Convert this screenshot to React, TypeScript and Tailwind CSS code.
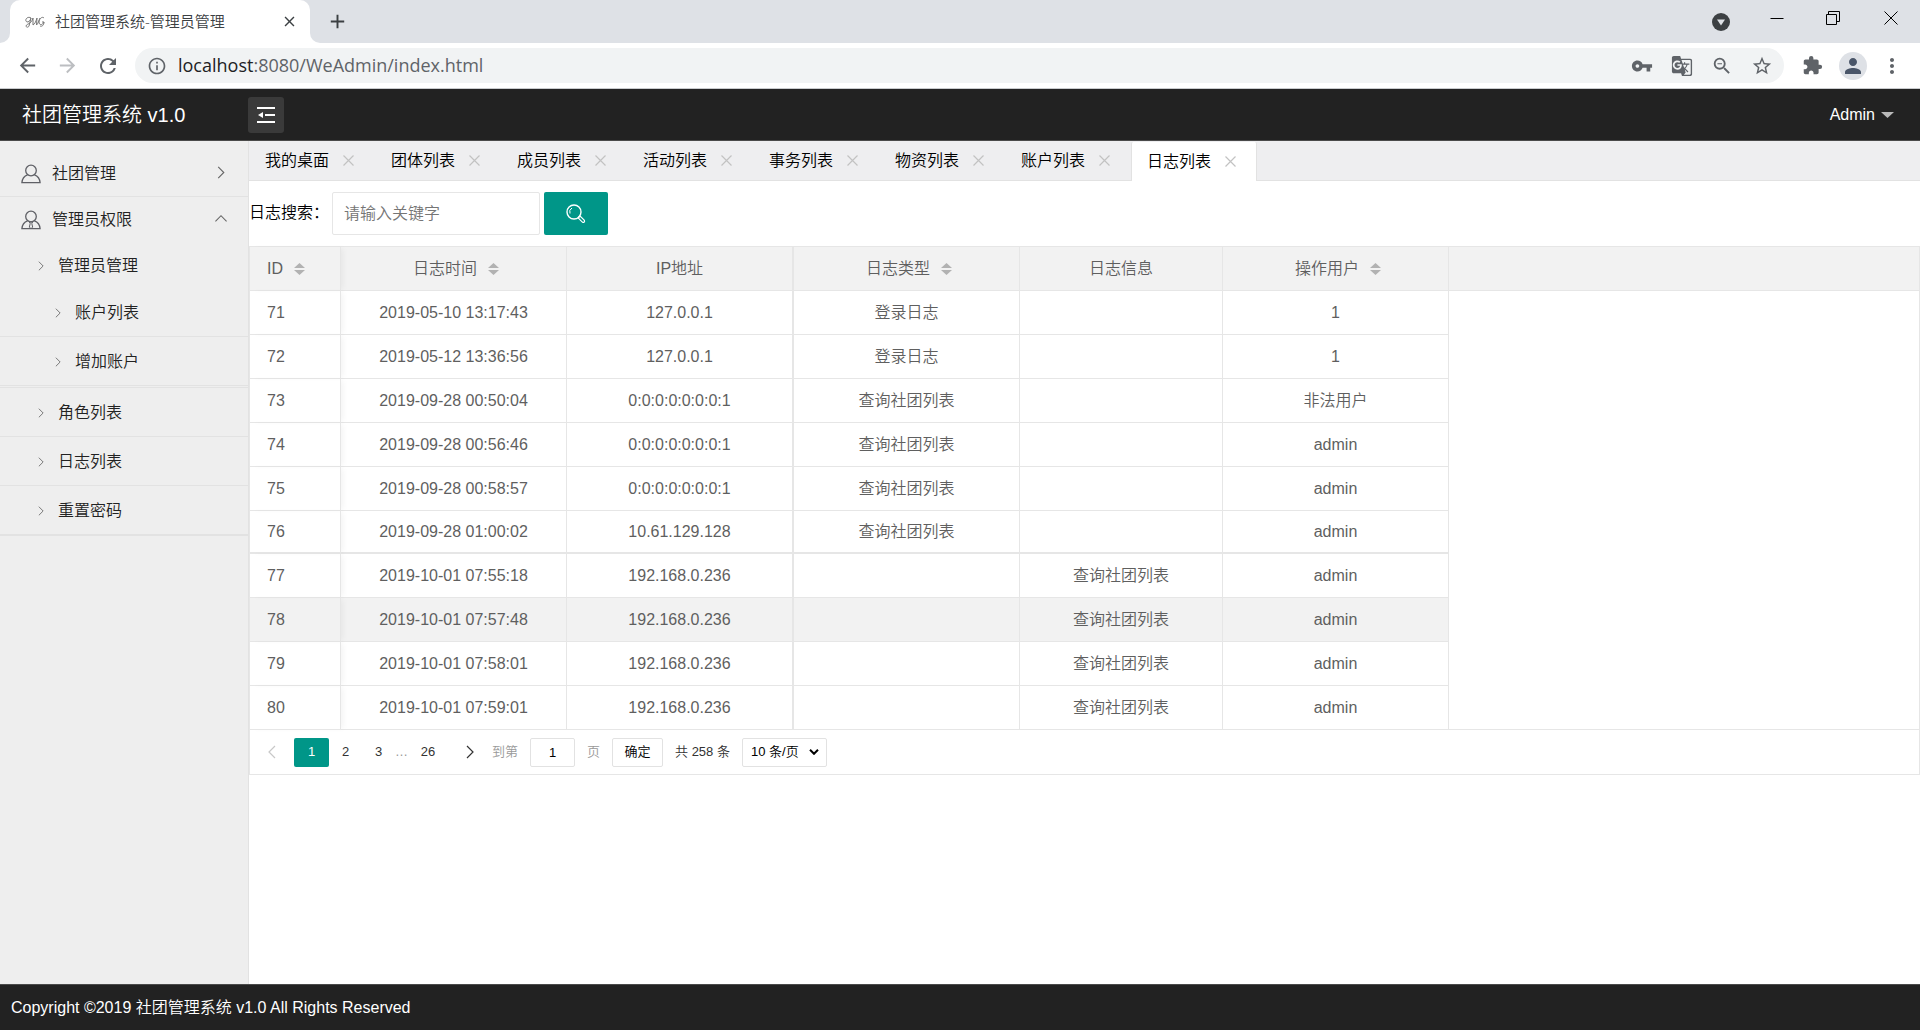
import React, { useState } from 'react';
import {
  MdAdd,
  MdArrowBack,
  MdArrowForward,
  MdClose,
  MdExtension,
  MdGTranslate,
  MdInfoOutline,
  MdMoreVert,
  MdPerson,
  MdRefresh,
  MdStarBorder,
  MdVpnKey,
  MdZoomOut,
} from 'react-icons/md';

interface LogRow {
  id: number;
  time: string;
  ip: string;
  type: string;
  info: string;
  user: string;
}

const logs: LogRow[] = [
  { id: 71, time: '2019-05-10 13:17:43', ip: '127.0.0.1', type: '登录日志', info: '', user: '1' },
  { id: 72, time: '2019-05-12 13:36:56', ip: '127.0.0.1', type: '登录日志', info: '', user: '1' },
  { id: 73, time: '2019-09-28 00:50:04', ip: '0:0:0:0:0:0:0:1', type: '查询社团列表', info: '', user: '非法用户' },
  { id: 74, time: '2019-09-28 00:56:46', ip: '0:0:0:0:0:0:0:1', type: '查询社团列表', info: '', user: 'admin' },
  { id: 75, time: '2019-09-28 00:58:57', ip: '0:0:0:0:0:0:0:1', type: '查询社团列表', info: '', user: 'admin' },
  { id: 76, time: '2019-09-28 01:00:02', ip: '10.61.129.128', type: '查询社团列表', info: '', user: 'admin' },
  { id: 77, time: '2019-10-01 07:55:18', ip: '192.168.0.236', type: '', info: '查询社团列表', user: 'admin' },
  { id: 78, time: '2019-10-01 07:57:48', ip: '192.168.0.236', type: '', info: '查询社团列表', user: 'admin' },
  { id: 79, time: '2019-10-01 07:58:01', ip: '192.168.0.236', type: '', info: '查询社团列表', user: 'admin' },
  { id: 80, time: '2019-10-01 07:59:01', ip: '192.168.0.236', type: '', info: '查询社团列表', user: 'admin' },
];

const pageTabs = ['我的桌面', '团体列表', '成员列表', '活动列表', '事务列表', '物资列表', '账户列表', '日志列表'];

const columns = [
  { title: '日志时间', sortable: true },
  { title: 'IP地址', sortable: false },
  { title: '日志类型', sortable: true },
  { title: '日志信息', sortable: false },
  { title: '操作用户', sortable: true },
];

const Chevron = ({ className }: { className: string }) => (
  <svg viewBox="0 0 8 14" className={className} fill="none" stroke="currentColor" strokeWidth="1.2">
    <path d="M1 1l6 6-6 6" />
  </svg>
);

const SortIcon = () => (
  <svg viewBox="0 0 11 12" className="ml-[11px] -mr-[5px] h-3 w-[11px] fill-[#b2b2b2]">
    <path d="M5.500 0L11 5H0zM0 7h11l-5.500 5z" />
  </svg>
);

const UserIcon = ({ tie = false }: { tie?: boolean }) => (
  <svg viewBox="0 0 20 20" className="h-5 w-5" fill="none" stroke="#5f6066" strokeWidth="1.3">
    <circle cx="10" cy="6.500" r="5.300" />
    <path d="M6.600 10.800C3.200 12 1.200 14.800 .9 18.600h18.200c-.3-3.800-2.300-6.600-5.700-7.800" />
    {tie && <path d="M8.400 12h3.200l-.8 1.600.9 3.600-1.700 1.400-1.700-1.400.9-3.600z" strokeWidth="1" />}
  </svg>
);

const BrowserChrome = () => (
  <div className="font-['Open_Sans','Noto_Sans_CJK_SC',sans-serif]">
    <div className="flex h-[43px] items-start bg-[#dee1e6]">
      <div className="flex h-[43px] w-[10px] bg-white">
        <div className="flex-1 rounded-br-[10px] bg-[#dee1e6]" />
      </div>
      <div className="flex h-[43px] w-[300px] items-center rounded-t-[10px] bg-white pr-3 pl-[15px]">
        <svg viewBox="0 0 20 12" className="h-3 w-5" fill="none" stroke="#777" strokeWidth="1">
          <path d="M6 2C3 0 0 3 1 5s4 1 5-3L4 10c-1 2-3 1-3 0 1-3 5-1 7-8v7c2-1 3-4 4-7l-.5 7C13 8 14 4 15 2M19 2c-2-2-5 1-5 4s3 4 5 0h-2M19 6c0 3-2 5-4 4" />
        </svg>
        <span className="ml-[10px] text-[15px] font-[350] text-[#3c4043]">社团管理系统-管理员管理</span>
        <button className="ml-auto text-[#3c4043]" aria-label="Close tab">
          <MdClose size={17} />
        </button>
      </div>
      <div className="flex h-[43px] w-[10px] bg-white">
        <div className="flex-1 rounded-bl-[10px] bg-[#dee1e6]" />
      </div>
      <button className="mt-[10px] ml-[6px] text-[#3c4043]" aria-label="New tab">
        <MdAdd size={23} />
      </button>
      <div className="ml-auto flex h-[43px] items-center pr-[22px]">
        <button aria-label="Search tabs">
          <svg viewBox="0 0 18 18" className="h-[18px] w-[18px]">
            <circle cx="9" cy="9" r="9" fill="#3c4043" />
            <path d="M5 6.500h8L9 12.500z" fill="#dee1e6" />
          </svg>
        </button>
        <button className="ml-10 pb-2" aria-label="Minimize">
          <svg viewBox="0 0 14 14" className="h-[14px] w-[14px]" stroke="#000">
            <path d="M.5 7.500h13" />
          </svg>
        </button>
        <button className="ml-[42px] pb-2" aria-label="Restore">
          <svg viewBox="0 0 14 14" className="h-[14px] w-[14px]" fill="none" stroke="#000">
            <path d="M.5 3.500h10v10h-10zM2.500 3.500v-3h11v10h-3" />
          </svg>
        </button>
        <button className="ml-[44px] pb-2" aria-label="Close window">
          <svg viewBox="0 0 14 14" className="h-[14px] w-[14px]" stroke="#000">
            <path d="M.5.5l13 13M13.500.5l-13 13" />
          </svg>
        </button>
      </div>
    </div>
    <div className="flex h-[46px] items-center border-b border-[#c9cbce] bg-white text-[#5f6368]">
      <button className="ml-4" aria-label="Back">
        <MdArrowBack size={23} />
      </button>
      <button className="ml-[17px] text-[#bcbec1]" aria-label="Forward">
        <MdArrowForward size={23} />
      </button>
      <button className="ml-[17px]" aria-label="Reload">
        <MdRefresh size={24} />
      </button>
      <div className="ml-[15px] flex h-[35px] flex-1 items-center rounded-full bg-[#f1f3f4] pr-[11px] pl-3">
        <MdInfoOutline size={20} />
        <span className="ml-[11px] text-[18px]">
          <span className="text-[#202124]">localhost</span>:8080/WeAdmin/index.html
        </span>
        <div className="ml-auto flex items-center gap-[18px]">
          <MdVpnKey size={22} />
          <MdGTranslate size={22} />
          <MdZoomOut size={22} />
          <MdStarBorder size={22} />
        </div>
      </div>
      <MdExtension size={21} className="ml-[18px]" />
      <div className="ml-4 flex h-7 w-7 items-center justify-center rounded-full bg-[#dee1e6] text-[#4a5669]">
        <MdPerson size={24} />
      </div>
      <button className="mr-4 ml-[13px]" aria-label="Menu">
        <MdMoreVert size={24} />
      </button>
    </div>
  </div>
);

const AppHeader = () => (
  <header className="flex h-[52px] items-center border-b border-[#4a4a4a] bg-[#222222] text-white">
    <h1 className="w-[248px] pl-[22px] text-[20px] font-[350]">社团管理系统 v1.0</h1>
    <button className="flex h-9 w-9 items-center justify-center rounded-[3px] bg-[#3a3a3a]" aria-label="Toggle menu">
      <svg viewBox="0 0 18 16" className="h-4 w-[18px]" fill="none" stroke="#fff" strokeWidth="2">
        <path d="M0 1h18M8 8h10M0 15h18" />
        <path d="M6 5v6L1 8z" fill="#fff" stroke="none" />
      </svg>
    </button>
    <button className="mr-[26px] ml-auto flex items-center gap-[6px] text-base">
      Admin
      <svg viewBox="0 0 13 6" className="h-[6px] w-[13px] fill-[#b9b9b9]">
        <path d="M0 0h13L6.500 6z" />
      </svg>
    </button>
  </header>
);

const Sidebar = () => {
  const linkClass = 'flex h-[49px] items-center border-b border-[#e2e2e2] pt-[2px]';

  return (
    <nav className="w-[249px] shrink-0 border-r border-[#e2e2e2] bg-[#eeeeee] pt-[11px] font-[350] text-[#222]">
      <a href="#club" className="flex h-[45px] items-center border-b border-[#e2e2e2] pr-[23px] pl-[21px]">
        <UserIcon />
        <span className="ml-[11px]">社团管理</span>
        <Chevron className="mb-1 ml-auto h-[13px] w-2 text-[#666]" />
      </a>
      <a href="#admin" className="flex h-[46px] items-center pr-[23px] pl-[21px]">
        <UserIcon tie />
        <span className="ml-[11px]">管理员权限</span>
        <Chevron className="mb-1 ml-auto h-[13px] w-2 -rotate-90 text-[#666]" />
      </a>
      <a href="#manage" className="flex h-[45px] items-center pl-[38px]">
        <Chevron className="h-[10px] w-[6px] text-[#666]" />
        <span className="ml-[14px]">管理员管理</span>
      </a>
      <div className="border-b border-[#e2e2e2] pb-px">
        {['账户列表', '增加账户'].map((label) => (
          <a key={label} href="#account" className={`${linkClass} pl-[55px]`}>
            <Chevron className="h-[10px] w-[6px] text-[#666]" />
            <span className="ml-[14px]">{label}</span>
          </a>
        ))}
      </div>
      <div className="border-b border-[#e2e2e2]">
        {['角色列表', '日志列表', '重置密码'].map((label) => (
          <a key={label} href="#item" className={`${linkClass} pl-[38px]`}>
            <Chevron className="h-[10px] w-[6px] text-[#666]" />
            <span className="ml-[14px]">{label}</span>
          </a>
        ))}
      </div>
    </nav>
  );
};

const TabBar = () => {
  const [active, setActive] = useState('日志列表');

  return (
    <div className="flex h-10 border-b border-[#e2e2e2] bg-[#eeeef0]">
      {pageTabs.map((tab) => (
        <button
          key={tab}
          onClick={() => setActive(tab)}
          className={`flex w-[126px] items-center border-x pr-5 pl-[15px] font-[350] ${
            active === tab ? '-mb-px mt-px rounded-t-[2px] border-[#e2e2e2] bg-white' : 'border-transparent'
          }`}
        >
          {tab}
          <svg viewBox="0 0 11 11" className="ml-auto h-[11px] w-[11px]" stroke="#c2c2c2" strokeWidth="1.2">
            <path d="M.5.5l10 10M10.500.5l-10 10" />
          </svg>
        </button>
      ))}
    </div>
  );
};

const LogTable = () => {
  const cell = 'border-r border-[#e6e6e6]';
  const idCell = 'relative pl-[17px] text-left shadow-[4px_0_6px_-2px_rgba(0,0,0,0.05)]';

  return (
    <table className="w-full table-fixed border-separate border-spacing-0 text-center text-[#5f5f5f]">
      <colgroup>
        <col className="w-[91px]" />
        <col className="w-[226px]" />
        <col className="w-[227px]" />
        <col className="w-[226px]" />
        <col className="w-[203px]" />
        <col className="w-[226px]" />
        <col />
      </colgroup>
      <thead>
        <tr className="h-11 bg-[#f2f2f2]">
          <th className={`${cell} ${idCell} border-b font-[350]`}>
            <div className="flex items-center">
              ID
              <SortIcon />
            </div>
          </th>
          {columns.map((col, i) => (
            <th key={col.title} className={`${cell} border-b font-[350] ${i === 1 ? 'border-r-2' : ''}`}>
              <div className="flex items-center justify-center">
                {col.title}
                {col.sortable && <SortIcon />}
              </div>
            </th>
          ))}
          <th className="border-b border-[#e6e6e6]" />
        </tr>
      </thead>
      <tbody className="font-[350]">
        {logs.map((row, i) => {
          const line = row.id === 76 ? 'h-[43px] border-b-2' : 'h-11 border-b';
          return (
            <tr key={row.id} className={row.id === 78 ? 'bg-[#f2f2f2]' : ''}>
              <td className={`${cell} ${line} ${idCell}`}>{row.id}</td>
              <td className={`${cell} ${line}`}>{row.time}</td>
              <td className={`${cell} ${line} border-r-2`}>{row.ip}</td>
              <td className={`${cell} ${line}`}>{row.type}</td>
              <td className={`${cell} ${line}`}>{row.info}</td>
              <td className={`${cell} ${line}`}>{row.user}</td>
              {i === 0 && <td rowSpan={logs.length} className="border-b border-[#e6e6e6] bg-white" />}
            </tr>
          );
        })}
      </tbody>
    </table>
  );
};

const Pagination = () => (
  <div className="flex h-11 items-center text-[13px] font-[350] text-[#333]">
    <button className="flex w-[44px] justify-center text-[#c8c8c8]" aria-label="Previous page">
      <Chevron className="h-[14px] w-2 rotate-180" />
    </button>
    <button className="h-[29px] w-[35px] rounded-[2px] bg-[#009688] font-normal text-white">1</button>
    <button className="w-[33px]">2</button>
    <button className="w-[33px]">3</button>
    <span className="w-[13px] text-center text-[#999]">…</span>
    <button className="w-[40px]">26</button>
    <button className="flex w-[44px] justify-center" aria-label="Next page">
      <Chevron className="h-[14px] w-2" />
    </button>
    <div className="flex items-center gap-3">
      <label htmlFor="page-no" className="text-[#999]">到第</label>
      <input
        id="page-no"
        defaultValue="1"
        className="h-[29px] w-[45px] rounded-[2px] border border-[#e2e2e2] text-center text-black"
      />
      <span className="text-[#999]">页</span>
      <button className="h-[29px] w-[51px] rounded-[2px] border border-[#e2e2e2] text-black">确定</button>
      <span>共 258 条</span>
      <div className="relative flex items-center">
        <select
          aria-label="每页条数"
          className="h-[29px] w-[85px] appearance-none rounded-[2px] border border-[#e2e2e2] pl-2 text-black"
        >
          <option>10 条/页</option>
          <option>20 条/页</option>
        </select>
        <svg
          viewBox="0 0 10 6"
          className="pointer-events-none absolute right-2 h-[6px] w-[10px]"
          fill="none"
          stroke="#000"
          strokeWidth="2"
        >
          <path d="M1 .8l4 4 4-4" />
        </svg>
      </div>
    </div>
  </div>
);

const App: React.FC = () => {
  return (
    <div className="flex min-h-screen flex-col bg-white font-['Liberation_Sans','Noto_Sans_CJK_SC',sans-serif] text-base text-black">
      <BrowserChrome />
      <AppHeader />
      <div className="flex flex-1">
        <Sidebar />
        <main className="min-w-0 flex-1">
          <TabBar />
          <form className="flex h-[65px] items-center" onSubmit={(e) => e.preventDefault()}>
            <label htmlFor="keyword" className="w-[83px] pb-[2px] font-[350]">日志搜索：</label>
            <input
              id="keyword"
              placeholder="请输入关键字"
              className="h-[43px] w-[208px] rounded-[2px] border border-[#e6e6e6] pl-[11px] font-[350] placeholder:text-[#757575]"
            />
            <button
              className="ml-1 flex h-[43px] w-16 items-center justify-center rounded-[2px] bg-[#009688]"
              aria-label="搜索"
            >
              <svg viewBox="0 0 20 20" className="h-5 w-5" fill="none" stroke="#fff" strokeWidth="1.4">
                <circle cx="8" cy="8" r="7" />
                <path d="M4 9.500a4.500 4.500 0 0 1 2-5.500" strokeWidth="1" />
                <path d="M12.800 12.800l1.600-.4 4 4c.6 1.400-.6 2.400-1.800 1.900l-4-4z" strokeWidth="1.2" />
              </svg>
            </button>
          </form>
          <div className="border border-[#e6e6e6]">
            <LogTable />
            <Pagination />
          </div>
        </main>
      </div>
      <footer className="flex h-[46px] items-center border-t border-[#4a4a4a] bg-[#222222] pl-[11px] font-[350] text-white">
        Copyright ©2019 社团管理系统 v1.0 All Rights Reserved
      </footer>
    </div>
  );
};

export default App;
